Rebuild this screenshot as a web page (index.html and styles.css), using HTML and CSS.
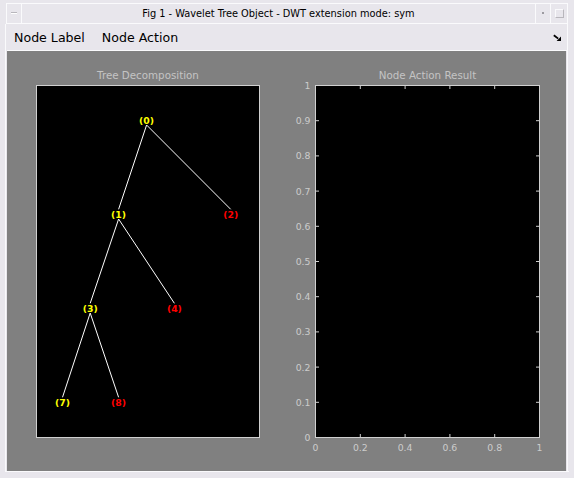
FILE: index.html
```html
<!DOCTYPE html>
<html>
<head>
<meta charset="utf-8">
<link rel="stylesheet" href="styles.css">
</head>
<body>
<div class="window">
  <div class="frame-top"></div>
  <div class="titlebar">
    <div class="tb-btn tb-min"><span class="min-glyph"></span></div>
    <div class="tb-title">Fig 1 - Wavelet Tree Object - DWT extension mode: sym</div>
    <div class="tb-btn tb-dot"><span class="dot-glyph"></span></div>
    <div class="tb-btn tb-max"><span class="max-glyph"></span></div>
  </div>
  <div class="client">
    <div class="menubar">
      <span class="menu-item">Node Label</span>
      <span class="menu-item">Node Action</span>
      <span class="spacer"></span>
      <svg class="dock-icon" width="9" height="8" viewBox="0 0 9 8">
        <path d="M0.8 1.2 L5.2 4.6" stroke="#000" stroke-width="1.8" fill="none"/>
        <path d="M8 7 L8 2.6 L3.6 7 Z" fill="#000"/>
      </svg>
    </div>
    <div class="figure">
      <svg class="plot" width="559" height="420" viewBox="7 51 559 420">
        <!-- Left axes: Tree Decomposition -->
        <text class="ax-title" x="148" y="79" text-anchor="middle">Tree Decomposition</text>
        <rect x="36.5" y="85.5" width="223" height="352" fill="#000" stroke="#d0d0d0" stroke-width="1"/>
        <g stroke="#fff" stroke-width="1" fill="none">
          <line x1="146.6" y1="125" x2="118.6" y2="209.3"/>
          <line x1="146.6" y1="125" x2="230.7" y2="209.3"/>
          <line x1="118.6" y1="219" x2="90.2" y2="303.3"/>
          <line x1="118.6" y1="219" x2="174.4" y2="303.3"/>
          <line x1="90.2" y1="313" x2="62.5" y2="397.3"/>
          <line x1="90.2" y1="313" x2="118.6" y2="397.3"/>
        </g>
        <g class="node" text-anchor="middle">
          <text x="146.6" y="124.2" fill="#ffff00">(0)</text>
          <text x="118.6" y="218.2" fill="#ffff00">(1)</text>
          <text x="230.7" y="218.2" fill="#ff0000">(2)</text>
          <text x="90.2" y="312.2" fill="#ffff00">(3)</text>
          <text x="174.4" y="312.2" fill="#ff0000">(4)</text>
          <text x="62.5" y="406.2" fill="#ffff00">(7)</text>
          <text x="118.6" y="406.2" fill="#ff0000">(8)</text>
        </g>

        <!-- Right axes: Node Action Result -->
        <text class="ax-title" x="427.5" y="79" text-anchor="middle">Node Action Result</text>
        <rect x="315.5" y="85.5" width="224" height="352" fill="#000" stroke="#d0d0d0" stroke-width="1"/>
        <g stroke="#d0d0d0" stroke-width="1">
          <line x1="316" y1="402.3" x2="319" y2="402.3"/><line x1="536" y1="402.3" x2="539" y2="402.3"/>
          <line x1="316" y1="367.1" x2="319" y2="367.1"/><line x1="536" y1="367.1" x2="539" y2="367.1"/>
          <line x1="316" y1="331.9" x2="319" y2="331.9"/><line x1="536" y1="331.9" x2="539" y2="331.9"/>
          <line x1="316" y1="296.7" x2="319" y2="296.7"/><line x1="536" y1="296.7" x2="539" y2="296.7"/>
          <line x1="316" y1="261.5" x2="319" y2="261.5"/><line x1="536" y1="261.5" x2="539" y2="261.5"/>
          <line x1="316" y1="226.3" x2="319" y2="226.3"/><line x1="536" y1="226.3" x2="539" y2="226.3"/>
          <line x1="316" y1="191.1" x2="319" y2="191.1"/><line x1="536" y1="191.1" x2="539" y2="191.1"/>
          <line x1="316" y1="155.9" x2="319" y2="155.9"/><line x1="536" y1="155.9" x2="539" y2="155.9"/>
          <line x1="316" y1="120.7" x2="319" y2="120.7"/><line x1="536" y1="120.7" x2="539" y2="120.7"/>
          <line x1="360.3" y1="86" x2="360.3" y2="89"/><line x1="360.3" y1="434" x2="360.3" y2="437"/>
          <line x1="405.1" y1="86" x2="405.1" y2="89"/><line x1="405.1" y1="434" x2="405.1" y2="437"/>
          <line x1="449.9" y1="86" x2="449.9" y2="89"/><line x1="449.9" y1="434" x2="449.9" y2="437"/>
          <line x1="494.7" y1="86" x2="494.7" y2="89"/><line x1="494.7" y1="434" x2="494.7" y2="437"/>
        </g>
        <g class="tick" text-anchor="end">
          <text x="310.5" y="441">0</text>
          <text x="310.5" y="405.8">0.1</text>
          <text x="310.5" y="370.6">0.2</text>
          <text x="310.5" y="335.4">0.3</text>
          <text x="310.5" y="300.2">0.4</text>
          <text x="310.5" y="265">0.5</text>
          <text x="310.5" y="229.8">0.6</text>
          <text x="310.5" y="194.6">0.7</text>
          <text x="310.5" y="159.4">0.8</text>
          <text x="310.5" y="124.2">0.9</text>
          <text x="310.5" y="89">1</text>
        </g>
        <g class="tick" text-anchor="middle">
          <text x="315.5" y="450.8">0</text>
          <text x="360.3" y="450.8">0.2</text>
          <text x="405.1" y="450.8">0.4</text>
          <text x="449.9" y="450.8">0.6</text>
          <text x="494.7" y="450.8">0.8</text>
          <text x="539.5" y="450.8">1</text>
        </g>
      </svg>
    </div>
  </div>
  <div class="bottom-strip"></div>
</div>
</body>
</html>
```

FILE: styles.css
```css
html, body {
  margin: 0;
  padding: 0;
}
body {
  width: 574px;
  height: 478px;
  overflow: hidden;
  background: #e8e6ec;
  font-family: "DejaVu Sans", sans-serif;
}
.window {
  width: 574px;
  height: 478px;
  background: #e8e6ec;
  display: flex;
  flex-direction: column;
  box-sizing: border-box;
}
.frame-top {
  height: 3px;
}
.titlebar {
  display: flex;
  margin: 0 6px 0 6px;
  border-top: 1px solid #fafafc;
  border-bottom: 1px solid #fafafc;
  box-sizing: border-box;
  height: 21px;
}
.tb-btn {
  display: flex;
  align-items: center;
  justify-content: center;
  box-sizing: border-box;
}
.tb-min {
  width: 16px;
  border-left: 1px solid #fafafc;
  border-right: 1px solid #fafafc;
}
.min-glyph {
  width: 6px;
  height: 2px;
  background: #ffffff;
  border-top: 1px solid #b8b6bc;
  box-sizing: border-box;
}
.tb-title {
  flex: 1;
  text-align: center;
  font-family: "DejaVu Sans Condensed", "DejaVu Sans", sans-serif;
  font-stretch: condensed;
  font-size: 10.9px;
  line-height: 19px;
  color: #000;
}
.tb-dot {
  width: 16px;
  border-left: 1px solid #fafafc;
  border-right: 1px solid #fafafc;
}
.dot-glyph {
  width: 2px;
  height: 2px;
  background: #9c9aa0;
}
.tb-max {
  width: 17px;
  border-right: 1px solid #fafafc;
}
.max-glyph {
  width: 7px;
  height: 7px;
  border: 1px solid #fafafc;
  border-right-color: #b8b6bc;
  border-bottom-color: #b8b6bc;
}
.client {
  display: flex;
  flex-direction: column;
  margin-left: 5px;
  margin-right: 6px;
  border-left: 1px solid #fafafc;
  border-right: 1px solid #fafafc;
}
.menubar {
  display: flex;
  align-items: center;
  height: 26px;
  padding-left: 7px;
  padding-right: 5px;
  gap: 17px;
  border-bottom: 1px solid #fafafc;
  margin-left: 1px;
}
.menu-item {
  font-size: 12.6px;
  color: #000;
  line-height: 16px;
  padding-top: 2px;
}
.spacer {
  flex: 1;
}
.dock-icon {
  display: block;
  margin-top: 2px;
}
.figure {
  width: 559px;
  height: 420px;
  margin-left: 1px;
  background: #808080;
}
.plot {
  display: block;
}
.ax-title {
  font-family: "DejaVu Sans", sans-serif;
  font-size: 10.3px;
  fill: #c4c4c4;
}
.tick text, .tick {
  font-family: "DejaVu Sans", sans-serif;
  font-size: 9.3px;
  fill: #cccccc;
}
.node text, .node {
  font-family: "DejaVu Sans", sans-serif;
  font-size: 9.3px;
  font-weight: bold;
}
.bottom-strip {
  height: 7px;
  border-top: 1px solid #fafafc;
  margin: 0 5px;
}
```
